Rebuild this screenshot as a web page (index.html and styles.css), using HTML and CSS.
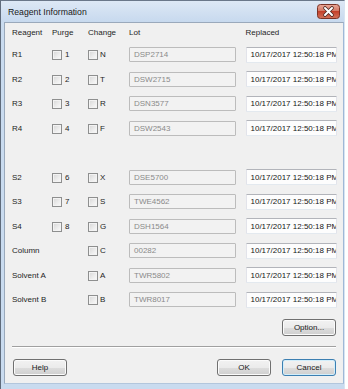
FILE: index.html
```html
<!DOCTYPE html>
<html>
<head>
<meta charset="utf-8">
<link rel="stylesheet" href="styles.css">
</head>
<body>
<div class="window">
  <div class="titlebar">
    <span class="title">Reagent Information</span>
    <div class="close">
      <svg width="23" height="15" viewBox="0 0 23 15">
        <defs>
          <linearGradient id="cg" x1="0" y1="0" x2="0" y2="1">
            <stop offset="0" stop-color="#e9a899"/>
            <stop offset="0.45" stop-color="#d47a66"/>
            <stop offset="0.5" stop-color="#c4402a"/>
            <stop offset="1" stop-color="#d2735b"/>
          </linearGradient>
        </defs>
        <rect x="0.5" y="0.5" width="22" height="14" rx="3" fill="url(#cg)" stroke="#7b3326"/>
        <path d="M8 4 L15 11 M15 4 L8 11" stroke="#4a2a25" stroke-width="3.6" stroke-linecap="round"/>
        <path d="M8 4 L15 11 M15 4 L8 11" stroke="#ffffff" stroke-width="2" stroke-linecap="round"/>
      </svg>
    </div>
  </div>
  <div class="client">
    <div class="grid">
      <div class="hd">Reagent</div>
      <div class="hd">Purge</div>
      <div class="hd">Change</div>
      <div class="hd">Lot</div>
      <div class="hd">Replaced</div>

      <div class="lbl">R1</div>
      <div class="chk purge"><span class="box"></span>1</div>
      <div class="chk"><span class="box"></span>N</div>
      <div class="lot"><span class="field">DSP2714</span></div>
      <div class="rep"><span class="date">10/17/2017 12:50:18 PM</span></div>

      <div class="lbl">R2</div>
      <div class="chk purge"><span class="box"></span>2</div>
      <div class="chk"><span class="box"></span>T</div>
      <div class="lot"><span class="field">DSW2715</span></div>
      <div class="rep"><span class="date">10/17/2017 12:50:18 PM</span></div>

      <div class="lbl">R3</div>
      <div class="chk purge"><span class="box"></span>3</div>
      <div class="chk"><span class="box"></span>R</div>
      <div class="lot"><span class="field">DSN3577</span></div>
      <div class="rep"><span class="date">10/17/2017 12:50:18 PM</span></div>

      <div class="lbl">R4</div>
      <div class="chk purge"><span class="box"></span>4</div>
      <div class="chk"><span class="box"></span>F</div>
      <div class="lot"><span class="field">DSW2543</span></div>
      <div class="rep"><span class="date">10/17/2017 12:50:18 PM</span></div>

      <div class="blank"></div>

      <div class="lbl">S2</div>
      <div class="chk purge"><span class="box"></span>6</div>
      <div class="chk"><span class="box"></span>X</div>
      <div class="lot"><span class="field">DSE5700</span></div>
      <div class="rep"><span class="date">10/17/2017 12:50:18 PM</span></div>

      <div class="lbl">S3</div>
      <div class="chk purge"><span class="box"></span>7</div>
      <div class="chk"><span class="box"></span>S</div>
      <div class="lot"><span class="field">TWE4562</span></div>
      <div class="rep"><span class="date">10/17/2017 12:50:18 PM</span></div>

      <div class="lbl">S4</div>
      <div class="chk purge"><span class="box"></span>8</div>
      <div class="chk"><span class="box"></span>G</div>
      <div class="lot"><span class="field">DSH1564</span></div>
      <div class="rep"><span class="date">10/17/2017 12:50:18 PM</span></div>

      <div class="lbl">Column</div>
      <div class="empty"></div>
      <div class="chk"><span class="box"></span>C</div>
      <div class="lot"><span class="field">00282</span></div>
      <div class="rep"><span class="date">10/17/2017 12:50:18 PM</span></div>

      <div class="lbl">Solvent A</div>
      <div class="empty"></div>
      <div class="chk"><span class="box"></span>A</div>
      <div class="lot"><span class="field">TWR5802</span></div>
      <div class="rep"><span class="date">10/17/2017 12:50:18 PM</span></div>

      <div class="lbl">Solvent B</div>
      <div class="empty"></div>
      <div class="chk"><span class="box"></span>B</div>
      <div class="lot"><span class="field">TWR8017</span></div>
      <div class="rep"><span class="date">10/17/2017 12:50:18 PM</span></div>
    </div>

    <div class="option-row"><button class="btn">Option...</button></div>
    <div class="sep"></div>
    <div class="footer">
      <button class="btn">Help</button>
      <span class="spacer"></span>
      <button class="btn">OK</button>
      <button class="btn default">Cancel</button>
    </div>
  </div>
</div>
</body>
</html>
```

FILE: styles.css
```css
html, body {
  margin: 0;
  padding: 0;
  background: #ffffff;
}

body {
  font-family: "Liberation Sans", Arial, sans-serif;
  font-size: 8px;
  color: #1e1e1e;
}

.window {
  width: 345px;
  height: 389px;
  box-sizing: border-box;
  border-top: 1px solid #6a7789;
  border-left: 1px solid #5f6b7b;
  border-right: 1px solid #d8e4f2;
  background: #c9dbef;
  display: flex;
  flex-direction: column;
}

.titlebar {
  height: 21px;
  flex: none;
  display: flex;
  align-items: flex-start;
  background: linear-gradient(#dde8f5, #c7d9ee);
}

.title {
  font-size: 8.7px;
  color: #1a1a1a;
  margin-left: 7px;
  margin-top: 6px;
  line-height: 10px;
}

.close {
  margin-left: auto;
  margin-right: 4px;
  margin-top: 3px;
  width: 23px;
  height: 15px;
  line-height: 0;
}

.client {
  margin-left: 3px;
  height: 362px;
  box-sizing: border-box;
  background: #f0f0f0;
  border-top: 1px solid #9aa9bb;
  border-left: 1px solid #9aa9bb;
  border-right: 1px solid #9fb8d6;
  border-bottom: 1px solid #b3c6dc;
  display: flex;
  flex-direction: column;
}

.grid {
  display: grid;
  grid-template-columns: 40px 36px 41px 116.5px 91px;
  grid-template-rows: 20px repeat(11, 24.5px);
  padding-left: 7px;
  align-items: center;
}

.hd {
  line-height: 10px;
  color: #1e1e1e;
}

.lbl {
  line-height: 10px;
}

.blank {
  grid-column: 1 / -1;
}

.chk {
  display: flex;
  align-items: center;
  gap: 2px;
  line-height: 10px;
}

.chk.purge {
  gap: 3px;
}

.box {
  width: 10px;
  height: 10px;
  box-sizing: border-box;
  border: 1px solid #8e8f8f;
  background: linear-gradient(135deg, #d6d6d6 0%, #ececec 55%, #fbfbfb 100%);
  box-shadow: inset 0 0 0 1px #f3f3f3;
}

.field {
  display: flex;
  align-items: center;
  width: 107px;
  height: 15px;
  box-sizing: border-box;
  border: 1px solid #bcbcbc;
  border-radius: 1px;
  background: #f2f2f2;
  color: #8a8a8a;
  padding-left: 4px;
  margin-top: -1px;
}

.date {
  display: flex;
  align-items: center;
  width: 91px;
  height: 16px;
  box-sizing: border-box;
  border: 1px solid #e2e3ea;
  border-top-color: #b2b4ba;
  border-bottom-color: #e3e9ef;
  border-radius: 1px;
  background: #fdfdfd;
  color: #161616;
  padding-left: 4px;
  white-space: nowrap;
  overflow: hidden;
  margin-top: -1px;
}

.option-row {
  display: flex;
  justify-content: flex-end;
  padding-right: 7px;
  margin-top: 6.5px;
}

.btn {
  width: 54px;
  height: 17px;
  box-sizing: border-box;
  padding: 0;
  font-family: "Liberation Sans", Arial, sans-serif;
  font-size: 8px;
  color: #1a1a1a;
  border: 1px solid #707070;
  border-radius: 3px;
  background: linear-gradient(#f2f2f2 0%, #ebebeb 50%, #dddddd 51%, #cfcfcf 100%);
  box-shadow: inset 0 0 0 1px #fbfbfb;
}

.btn.default {
  border-color: #3c7fb1;
  box-shadow: inset 0 0 0 1px #d2eefb;
}

.sep {
  margin: 10px 7px 0 7px;
  height: 1px;
  background: #a0a0a0;
  border-bottom: 1px solid #ffffff;
}

.footer {
  display: flex;
  align-items: center;
  gap: 11px;
  padding-left: 8px;
  padding-right: 7px;
  margin-top: 11px;
}

.spacer {
  flex: 1;
}
```
